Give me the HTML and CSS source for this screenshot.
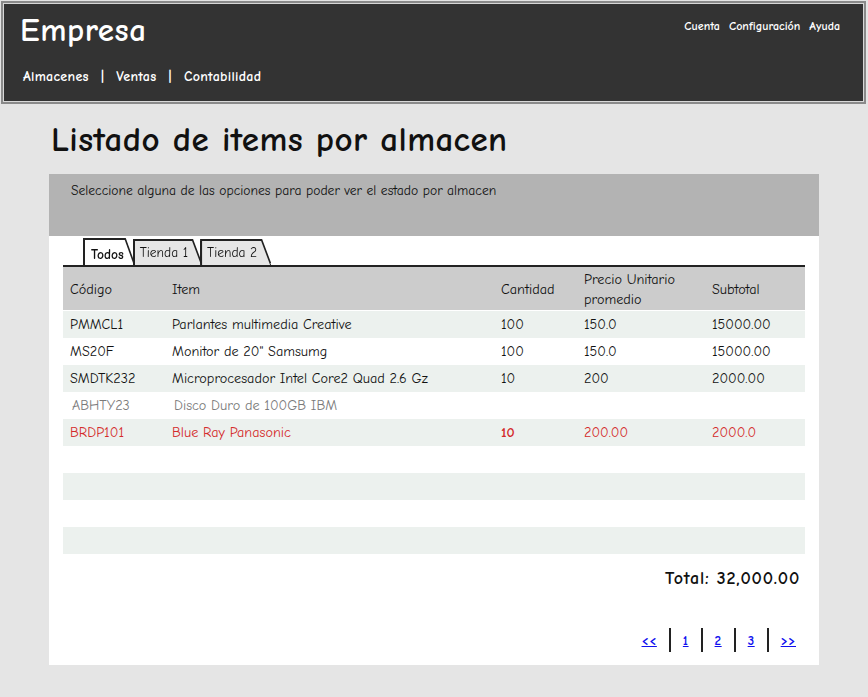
FILE: index.html
```html
<!DOCTYPE html>
<html lang="es">
<head>
<meta charset="utf-8">
<title>Listado de items por almacen</title>
<link rel="stylesheet" href="styles.css">
</head>
<body>
<header class="topbar">
  <div class="brand-col">
    <div class="brand">Empresa</div>
    <nav class="mainnav">
      <a>Almacenes</a><span class="sep">|</span><a>Ventas</a><span class="sep">|</span><a>Contabilidad</a>
    </nav>
  </div>
  <nav class="usernav"><a>Cuenta</a><a>Configuración</a><a>Ayuda</a></nav>
</header>

<main class="content">
  <h1 class="title">Listado de items por almacen</h1>
  <div class="notice">Seleccione alguna de las opciones para poder ver el estado por almacen</div>
  <section class="panel">
    <div class="tabs">
      <div class="tab-wrap active"><div class="tab">Todos</div></div>
      <div class="tab-wrap"><div class="tab">Tienda 1</div></div>
      <div class="tab-wrap"><div class="tab">Tienda 2</div></div>
    </div>
    <table class="grid">
      <colgroup>
        <col class="c1"><col class="c2"><col class="c3"><col class="c4"><col class="c5">
      </colgroup>
      <thead>
        <tr><th>Código</th><th>Item</th><th>Cantidad</th><th>Precio Unitario<br>promedio</th><th>Subtotal</th></tr>
      </thead>
      <tbody>
        <tr class="alt"><td>PMMCL1</td><td>Parlantes multimedia Creative</td><td>100</td><td>150.0</td><td>15000.00</td></tr>
        <tr><td>MS20F</td><td>Monitor de 20" Samsumg</td><td>100</td><td>150.0</td><td>15000.00</td></tr>
        <tr class="alt"><td>SMDTK232</td><td>Microprocesador Intel Core2 Quad 2.6 Gz</td><td>10</td><td>200</td><td>2000.00</td></tr>
        <tr class="muted"><td>ABHTY23</td><td>Disco Duro de 100GB IBM</td><td></td><td></td><td></td></tr>
        <tr class="alt alert"><td>BRDP101</td><td>Blue Ray Panasonic</td><td class="strong">10</td><td>200.00</td><td>2000.0</td></tr>
        <tr><td></td><td></td><td></td><td></td><td></td></tr>
        <tr class="alt"><td></td><td></td><td></td><td></td><td></td></tr>
        <tr><td></td><td></td><td></td><td></td><td></td></tr>
        <tr class="alt"><td></td><td></td><td></td><td></td><td></td></tr>
      </tbody>
    </table>
    <div class="total">Total: 32,000.00</div>
    <nav class="pager">
      <a href="#">&lt;&lt;</a><span class="bar"></span><a href="#">1</a><span class="bar"></span><a href="#">2</a><span class="bar"></span><a href="#">3</a><span class="bar"></span><a href="#">&gt;&gt;</a>
    </nav>
  </section>
</main>
</body>
</html>
```

FILE: styles.css
```css
* { box-sizing: border-box; }
html, body { margin: 0; padding: 0; }
body {
  background: #e5e5e5;
  font-family: "Comic Sans MS", "Comic Neue", "Open Sans", sans-serif;
  color: #111;
  width: 868px;
  height: 697px;
  overflow: hidden;
}
.topbar {
  margin: 1px 2px 0 1px;
  height: 103px;
  background: #333333;
  border: 2px solid #8a8a8a;
  box-shadow: inset 0 0 0 1px #d8d8d8;
  display: flex;
  justify-content: space-between;
  padding: 6px 24px 0 17px;
  color: #fff;
}
.brand {
  font-size: 33px;
  font-weight: bold;
  line-height: 42px;
  letter-spacing: 0.6px;
}
.mainnav {
  margin-top: 17px;
  margin-left: 3px;
  font-size: 14px;
  font-weight: bold;
  letter-spacing: 0.3px;
  display: flex;
}
.mainnav .sep { margin: 0 12px; }
.usernav {
  font-size: 12px;
  font-weight: bold;
  display: flex;
  gap: 9px;
  padding-top: 10px;
}
.content {
  padding: 0 49px;
}
.title {
  margin: 0;
  padding: 14px 0 0 2px;
  height: 70px;
  font-size: 35px;
  line-height: 44px;
  font-weight: bold;
  letter-spacing: 0.4px;
}
.notice {
  background: #b3b3b3;
  height: 62px;
  padding: 9px 22px;
  font-size: 13.6px;
  color: #111;
}
.panel {
  background: #fff;
  height: 429px;
  padding: 4px 14px 0;
}
.tabs {
  display: flex;
  align-items: flex-end;
  height: 27px;
  border-bottom: 2px solid #222;
  padding-left: 22px;
}
.tab-wrap {
  filter: drop-shadow(1.5px 0 0 #222) drop-shadow(-1.5px 0 0 #222) drop-shadow(0 -1.5px 0 #222);
  margin-right: 1px;
}
.tab {
  height: 24px;
  background: #e6e6e6;
  clip-path: polygon(0 0, calc(100% - 9px) 0, 100% 100%, 0 100%);
  padding: 2px 13px 0 5px;
  font-size: 13.5px;
  line-height: 20px;
}
.tab-wrap.active .tab {
  background: #fff;
  font-weight: bold;
  height: 25px;
  padding-top: 5px;
  padding-left: 6px;
  padding-right: 10px;
}
.grid {
  width: 100%;
  border-collapse: separate;
  border-spacing: 0;
  font-size: 14.2px;
}
.c1 { width: 102px; }
.c2 { width: 329px; }
.c3 { width: 83px; }
.c4 { width: 128px; }
.grid th {
  background: #cccccc;
  font-weight: normal;
  text-align: left;
  height: 43px;
  padding: 3px 7px 0;
  line-height: 20px;
  border-bottom: 1px solid #fff;
}
.grid td {
  height: 27px;
  padding: 0 7px;
  white-space: nowrap;
}
.grid tr.alt td { background: #ecf1ee; }
.grid tr.muted td { color: #7a7a7a; padding-left: 9px; }
.grid tr.alert td { color: #d42a2a; }
.grid td.strong { font-weight: bold; }
.total {
  text-align: right;
  font-size: 18px;
  font-weight: bold;
  letter-spacing: 0.8px;
  padding: 14px 5px 0 0;
  height: 71px;
}
.pager {
  display: flex;
  justify-content: flex-end;
  align-items: center;
  padding-right: 9px;
  gap: 12px;
  height: 30px;
}
.pager a {
  color: #1010ee;
  font-size: 13px;
  font-weight: bold;
  letter-spacing: 0.6px;
  text-decoration: underline;
}
.pager .bar {
  width: 2px;
  height: 24px;
  background: #222;
}
```
